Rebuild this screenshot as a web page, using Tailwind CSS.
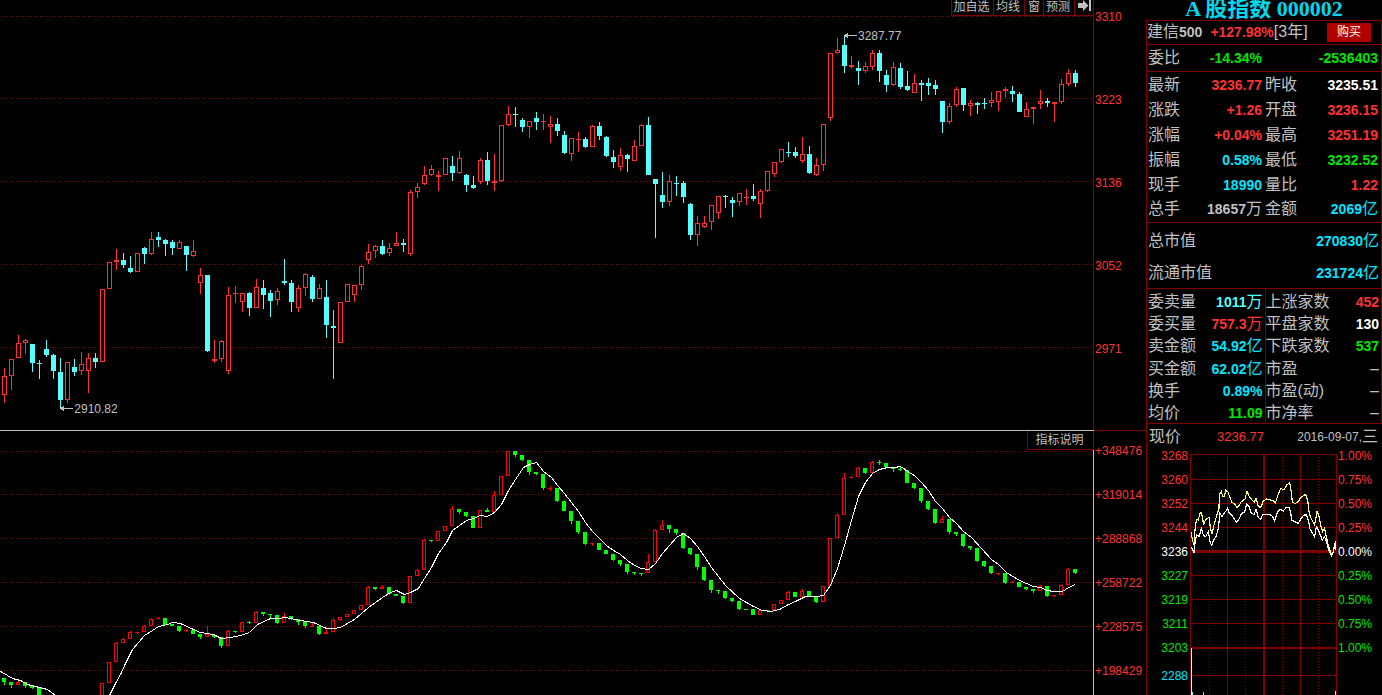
<!DOCTYPE html>
<html lang="zh-CN">
<head>
<meta charset="utf-8">
<title>A 股指数 000002</title>
<script src="https://cdn.jsdelivr.net/npm/@tailwindcss/browser@4"></script>
</head>
<body class="bg-black font-['Liberation_Sans','Noto_Sans_CJK_SC',sans-serif] text-[#c0c0c0]">
<div class="flex h-screen min-w-[900px] overflow-hidden">

  <main class="min-w-0 flex-1 text-xs">
    <section class="flex h-[430px]" aria-label="K线">
      <div class="relative min-w-0 flex-1 border-r border-[#800000]">
        <svg id="kline" class="block h-full w-full" viewBox="0 0 1093 430" preserveAspectRatio="none" shape-rendering="crispEdges"></svg>
        <nav class="absolute top-0 right-0 flex h-4 border-b border-[#800000] bg-black leading-[13px]">
          <button class="w-[42px] border-l border-[#800000] pr-0.5">加自选</button>
          <button class="w-[31px] border-l border-[#800000] pr-0.5">均线</button>
          <button class="w-[19px] border-l border-[#800000]">窗</button>
          <button class="w-[31px] border-l border-[#800000] pr-0.5">预测</button>
          <button class="flex w-[19px] justify-center border-l border-[#800000]" aria-label="展开">
            <svg class="h-3 w-[13px]" viewBox="0 0 13 12" fill="#c0c0c0"><path d="M0 3h5V0l5.500 5.500-5.500 5.500V8H0zM11 0h2v11h-2z"/></svg>
          </button>
        </nav>
        <span class="absolute top-7 left-[78.5%] leading-4">3287.77</span>
        <span class="absolute top-[401px] left-[6.8%] leading-4">2910.82</span>
      </div>
      <div class="w-[52px] pt-2 pl-px leading-[18px] text-[#ff3232]">
        <div class="h-[83px]">3310</div><div class="h-[83px]">3223</div><div class="h-[83px]">3136</div><div class="h-[83px]">3052</div><div class="h-[83px]">2971</div>
      </div>
    </section>

    <section class="flex h-[265px]" aria-label="指标">
      <div class="relative min-w-0 flex-1 border-t border-r border-[#c0c0c0]">
        <svg id="ind" class="block h-full w-full" viewBox="0 431 1093 264" preserveAspectRatio="none" shape-rendering="crispEdges"></svg>
        <button class="absolute top-0 -right-px h-[19px] w-[67px] border-x border-b border-[#800000] bg-black pr-0.5 leading-[18px]">指标说明</button>
      </div>
      <div class="w-[52px] border-t border-[#800000] pt-3 pl-px leading-4 text-[#ff3232]">
        <div class="h-11">+348476</div><div class="h-11">+319014</div><div class="h-11">+288868</div><div class="h-11">+258722</div><div class="h-11">+228575</div><div class="h-4">+198429</div>
      </div>
    </section>
  </main>

  <aside class="flex w-[236px] flex-col">
    <h1 class="h-5 text-center font-['Liberation_Serif','Noto_Sans_CJK_SC',serif] text-[22px] leading-[18px] font-bold whitespace-nowrap text-[#00d8ee]">A 股指数 000002</h1>
    <div class="border border-b-0 border-[#800000] text-base leading-4 whitespace-nowrap">
      <div class="flex h-6 items-center border-b border-[#800000] pr-2.5">
        <span>建信</span><b class="text-sm leading-4">500</b>
        <b class="ml-2 text-sm leading-4 text-[#ff3232]">+127.98%</b><span class="text-base leading-4">[3年]</span>
        <button class="ml-auto h-[19px] w-11 bg-[#b00000] text-xs text-white">购买</button>
      </div>
      <table class="w-full table-fixed text-right">
        <tbody>
          <tr class="h-[27px] border-b border-[#800000]"><th class="w-[49px] p-0 pl-px text-left font-normal">委比</th><td class="w-[66px] p-0"><b class="text-sm leading-4 text-[#00e600]">-14.34%</b></td><td class="p-0 pr-[3px]" colspan="2"><b class="text-sm leading-4 text-[#00e600]">-2536403</b></td></tr>
        </tbody>
      </table>
      <table class="w-full table-fixed border-b border-[#800000] text-right">
        <colgroup><col class="w-[49px]"><col class="w-[66px]"><col class="w-[62px]"><col></colgroup>
        <tbody>
          <tr class="h-[25px]"><th class="p-0 pl-px text-left font-normal">最新</th><td class="p-0"><b class="text-sm leading-4 text-[#ff3232]">3236.77</b></td><th class="p-0 pl-[3px] text-left font-normal">昨收</th><td class="p-0 pr-[3px]"><b class="text-sm leading-4 text-white">3235.51</b></td></tr>
          <tr class="h-[25px]"><th class="p-0 pl-px text-left font-normal">涨跌</th><td class="p-0"><b class="text-sm leading-4 text-[#ff3232]">+1.26</b></td><th class="p-0 pl-[3px] text-left font-normal">开盘</th><td class="p-0 pr-[3px]"><b class="text-sm leading-4 text-[#ff3232]">3236.15</b></td></tr>
          <tr class="h-[25px]"><th class="p-0 pl-px text-left font-normal">涨幅</th><td class="p-0"><b class="text-sm leading-4 text-[#ff3232]">+0.04%</b></td><th class="p-0 pl-[3px] text-left font-normal">最高</th><td class="p-0 pr-[3px]"><b class="text-sm leading-4 text-[#ff3232]">3251.19</b></td></tr>
          <tr class="h-[25px]"><th class="p-0 pl-px text-left font-normal">振幅</th><td class="p-0"><b class="text-sm leading-4 text-[#00e6ff]">0.58%</b></td><th class="p-0 pl-[3px] text-left font-normal">最低</th><td class="p-0 pr-[3px]"><b class="text-sm leading-4 text-[#00e600]">3232.52</b></td></tr>
          <tr class="h-[25px]"><th class="p-0 pl-px text-left font-normal">现手</th><td class="p-0"><b class="text-sm leading-4 text-[#00e6ff]">18990</b></td><th class="p-0 pl-[3px] text-left font-normal">量比</th><td class="p-0 pr-[3px]"><b class="text-sm leading-4 text-[#ff3232]">1.22</b></td></tr>
          <tr class="h-[25px]"><th class="p-0 pl-px text-left font-normal">总手</th><td class="p-0"><b class="text-sm leading-4">18657</b>万</td><th class="p-0 pl-[3px] text-left font-normal">金额</th><td class="p-0 pr-[3px] text-[#00e6ff]"><b class="text-sm leading-4">2069</b>亿</td></tr>
        </tbody>
      </table>
      <table class="w-full border-b border-[#800000] text-right [&_:is(td,th)]:pt-[3px]">
        <tbody>
          <tr class="h-[33px]"><th class="p-0 pl-px text-left font-normal">总市值</th><td class="p-0 pr-0.5 text-[#00e6ff]"><b class="text-sm leading-4">270830</b>亿</td></tr>
          <tr class="h-[33px]"><th class="p-0 pl-px text-left font-normal">流通市值</th><td class="p-0 pr-0.5 text-[#00e6ff]"><b class="text-sm leading-4">231724</b>亿</td></tr>
        </tbody>
      </table>
      <table class="h-[135px] w-full table-fixed border-b border-[#800000] text-right [&_:is(td,th)]:pt-[3px]">
        <colgroup><col class="w-[52px]"><col class="w-[66px]"><col class="w-[66px]"><col></colgroup>
        <tbody>
          <tr><th class="p-0 pl-px text-left font-normal">委卖量</th><td class="border-r border-[#800000] p-0 pr-0.5 text-[#54ffff]"><b class="text-sm leading-4">1011</b>万</td><th class="p-0 text-left font-normal">上涨家数</th><td class="p-0 pr-0.5"><b class="text-sm leading-4 text-[#ff3232]">452</b></td></tr>
          <tr><th class="p-0 pl-px text-left font-normal">委买量</th><td class="border-r border-[#800000] p-0 pr-0.5 text-[#ff3232]"><b class="text-sm leading-4">757.3</b>万</td><th class="p-0 text-left font-normal">平盘家数</th><td class="p-0 pr-0.5"><b class="text-sm leading-4 text-white">130</b></td></tr>
          <tr><th class="p-0 pl-px text-left font-normal">卖金额</th><td class="border-r border-[#800000] p-0 pr-0.5 text-[#00e6ff]"><b class="text-sm leading-4">54.92</b>亿</td><th class="p-0 text-left font-normal">下跌家数</th><td class="p-0 pr-0.5"><b class="text-sm leading-4 text-[#00e600]">537</b></td></tr>
          <tr><th class="p-0 pl-px text-left font-normal">买金额</th><td class="border-r border-[#800000] p-0 pr-0.5 text-[#00e6ff]"><b class="text-sm leading-4">62.02</b>亿</td><th class="p-0 text-left font-normal">市盈</th><td class="p-0 pr-0.5">–</td></tr>
          <tr><th class="p-0 pl-px text-left font-normal">换手</th><td class="border-r border-[#800000] p-0 pr-0.5 text-[#00e6ff]"><b class="text-sm leading-4">0.89%</b></td><th class="p-0 text-left font-normal">市盈(动)</th><td class="p-0 pr-0.5">–</td></tr>
          <tr><th class="p-0 pl-px text-left font-normal">均价</th><td class="border-r border-[#800000] p-0 pr-0.5 text-[#00e600]"><b class="text-sm leading-4">11.09</b></td><th class="p-0 text-left font-normal">市净率</th><td class="p-0 pr-0.5">–</td></tr>
        </tbody>
      </table>
    </div>

    <div class="flex-1 border-l border-[#800000] text-xs">
      <div class="flex h-5 items-center pt-1.5 pr-1 pl-0.5 leading-4">
        <span class="w-[68px] text-base leading-4">现价</span>
        <span class="flex-1 text-[13px] text-[#ff3232]">3236.77</span>
        <span>2016-09-07,</span><span class="text-base leading-4">三</span>
      </div>
      <div class="flex">
        <div class="w-[43px] pr-0.5 text-right leading-6 text-[#00e600]">
          <div class="text-[#ff3232]">3268</div><div class="text-[#ff3232]">3260</div><div class="text-[#ff3232]">3252</div><div class="text-[#ff3232]">3244</div><div class="text-white">3236</div><div>3227</div><div>3219</div><div>3211</div><div>3203</div><div class="pt-1 text-[#00e6ff]">2288</div>
        </div>
        <svg id="mini" class="mt-2.5 block h-[241px] min-w-0 flex-1" viewBox="0 0 147 241" preserveAspectRatio="none" shape-rendering="crispEdges"></svg>
        <div class="w-[45px] pl-px leading-6 text-[#00e600]">
          <div class="text-[#ff3232]">1.00%</div><div class="text-[#ff3232]">0.75%</div><div class="text-[#ff3232]">0.50%</div><div class="text-[#ff3232]">0.25%</div><div class="text-white">0.00%</div><div>0.25%</div><div>0.50%</div><div>0.75%</div><div>1.00%</div>
        </div>
      </div>
    </div>
  </aside>
</div>

<script>
const rect = (x, y, w, h, f) => `<rect x="${x}" y="${y}" width="${w}" height="${h}" fill="${f}"/>`;
const dots = (y) => `<path d="M1 ${y + .5}H1093" stroke="#800000" stroke-dasharray="1 2"/>`;
const parse = s => s.trim().split(/\s+/);
// Each bar: index, high, body top, body bottom, low, kind  (u = hollow, d = solid)
function bars(list, w, up, down) {
  return parse(list).map(t => {
    const [i, hi, top, bot, lo, k] = t.split(',').map((v, n) => n === 5 ? v : +v);
    const x = 2 + 7 * i, c = k === 'u' ? up : down;
    let o = rect(4 + 7 * i, hi, 1, lo - hi, c) + rect(x, top, w, bot - top, c);
    if (k === 'u' && bot - top > 2) o += rect(x + 1, top + 1, w - 2, bot - top - 2, '#000');
    return o;
  }).join('');
}
const K = `
0,368,376,395,403,u 1,359,359,376,390,u 2,335,343,358,358,u 3,339,340,343,354,u 4,344,344,363,372,d 5,360,363,364,379,d 6,340,349,355,357,d 7,354,355,371,379,d 8,358,372,400,409,d 9,362,362,400,403,u
10,359,367,372,376,d 11,352,364,371,375,u 12,353,358,371,393,u 13,353,358,362,368,d 14,289,289,362,362,u 15,262,262,289,289,u 16,249,260,262,270,u 17,253,260,265,268,d 18,256,268,272,273,d 19,253,253,272,272,u
20,247,248,254,264,d 21,232,239,254,255,u 22,232,237,240,247,d 23,239,240,244,256,d 24,240,242,248,255,d 25,240,242,249,249,u 26,246,246,255,271,d 27,240,251,256,257,u 28,268,275,283,294,u 29,275,275,351,352,d
30,340,359,361,363,u 31,340,341,359,362,u 32,287,295,371,374,u 33,286,293,294,303,u 34,293,293,302,312,u 35,292,293,308,316,d 36,279,287,308,308,u 37,280,288,295,309,d 38,290,293,301,317,d 39,288,291,300,305,u
40,259,281,283,285,d 41,280,283,302,312,d 42,285,288,308,312,u 43,273,274,288,296,u 44,275,277,299,302,d 45,284,288,299,299,u 46,280,297,325,338,d 47,310,326,328,379,d 48,302,302,343,343,u 49,284,284,302,302,u
50,285,285,295,302,u 51,265,266,285,290,u 52,244,252,260,264,u 53,245,246,251,258,u 54,240,246,254,255,d 55,243,248,253,256,u 56,232,243,246,246,u 57,239,243,245,252,d 58,190,192,254,256,u 59,183,187,192,198,u
60,166,175,184,185,u 61,165,169,175,176,u 62,171,175,177,191,u 63,158,158,175,175,u 64,156,166,173,181,d 65,151,158,173,174,u 66,174,175,185,192,d 67,176,185,188,189,d 68,158,160,182,184,u 69,152,160,181,185,d
70,154,181,183,191,u 71,125,125,181,182,u 72,106,114,125,126,u 73,107,114,115,127,d 74,118,120,127,132,d 75,121,121,127,138,u 76,112,118,122,130,d 77,114,121,122,130,u 78,116,124,127,143,u 79,118,124,131,136,d
80,131,135,153,154,d 81,138,138,154,161,u 82,132,139,140,152,u 83,137,139,147,148,d 84,125,126,147,147,u 85,122,126,136,140,d 86,136,137,156,157,d 87,150,157,162,168,d 88,148,155,167,171,u 89,154,155,159,172,d
90,140,146,161,161,u 91,124,125,146,146,u 92,117,125,175,175,d 93,179,179,184,238,d 94,172,195,202,208,d 95,175,181,202,206,u 96,176,183,184,196,d 97,181,183,197,203,d 98,203,204,235,240,d 99,216,223,235,246,u
100,216,223,227,228,u 101,205,205,222,230,u 102,196,196,213,219,u 103,195,196,197,208,d 104,197,200,203,217,d 105,193,193,202,206,u 106,189,197,198,205,u 107,184,196,199,201,d 108,189,191,204,218,u 109,171,171,191,192,u
110,162,162,174,177,u 111,149,149,162,163,u 112,142,152,153,157,d 113,147,152,156,158,d 114,137,154,161,163,u 115,146,154,173,174,d 116,158,165,175,176,u 117,124,124,165,171,u 118,53,53,118,121,u 119,38,50,53,54,u
120,35,45,66,73,d 121,56,65,67,69,u 122,61,68,71,85,d 123,62,66,71,73,u 124,50,53,67,70,u 125,50,53,71,82,d 126,70,75,85,92,d 127,62,67,85,86,u 128,63,68,87,89,d 129,71,86,90,91,d
130,74,83,93,93,u 131,80,83,85,101,d 132,78,83,86,95,d 133,80,85,89,95,d 134,101,101,122,133,d 135,103,106,122,124,u 136,87,89,105,107,u 137,88,88,105,111,d 138,100,103,106,116,u 139,102,103,105,114,d
140,98,103,104,109,d 141,92,100,103,107,u 142,91,91,102,111,u 143,87,89,91,98,u 144,86,91,94,102,d 145,92,94,112,112,d 146,102,109,117,117,u 147,107,107,109,124,u 148,90,101,104,109,u 149,98,101,103,107,d
150,102,102,104,122,u 151,79,84,102,104,u 152,69,73,84,86,u 153,70,73,83,87,d`;
const I = `
0,678,678,682,685,d 1,682,682,685,688,d 2,681,682,685,685,u 3,682,682,686,688,d 4,685,686,688,689,d 5,688,688,696,696,d 14,683,683,697,697,u 15,662,662,683,683,u 16,642,643,662,662,u 17,638,639,643,643,u 18,631,632,639,639,u 19,632,632,633,634,u
20,625,626,632,632,u 21,618,619,626,626,u 22,617,618,619,619,u 23,618,618,625,625,d 24,624,624,626,626,d 25,626,626,631,632,d 26,629,630,631,632,u 27,630,630,634,634,d 28,634,634,637,639,d 29,626,634,637,637,u
30,634,635,637,638,d 31,637,637,646,648,d 32,630,631,646,646,u 33,631,631,632,633,d 34,622,622,632,632,u 35,621,622,623,624,d 36,611,612,623,623,u 37,612,612,614,616,d 38,614,614,615,618,d 39,615,615,623,624,d
40,613,616,623,623,u 41,616,616,619,620,d 42,619,619,622,625,d 43,621,621,626,628,d 44,622,626,627,627,u 45,625,626,634,635,d 46,627,632,634,634,u 47,618,620,632,632,u 48,617,617,620,621,u 49,614,614,617,617,u
50,610,610,614,614,u 51,605,605,610,610,u 52,586,587,605,605,u 53,587,587,589,590,d 54,585,587,589,589,u 55,587,587,594,595,d 56,594,594,596,596,d 57,596,596,603,604,d 58,576,576,603,603,u 59,569,570,576,576,u
60,539,540,570,570,u 61,540,540,541,542,d 62,531,531,541,541,u 63,526,526,531,531,u 64,506,509,526,526,u 65,509,509,512,514,d 66,512,512,516,517,d 67,516,516,528,528,d 68,510,510,528,528,u 69,508,510,512,512,d
70,491,495,512,512,u 71,476,476,495,495,u 72,451,451,476,476,u 73,451,451,455,457,d 74,455,455,460,461,d 75,460,460,472,475,d 76,472,472,474,475,d 77,474,474,488,490,d 78,486,488,489,491,u 79,488,488,501,502,d
80,501,501,511,511,d 81,511,511,521,524,d 82,521,521,532,534,d 83,532,532,544,545,d 84,543,543,544,546,u 85,543,543,550,550,d 86,550,550,554,554,d 87,554,554,560,561,d 88,560,560,564,566,d 89,564,564,572,574,d
90,572,572,573,575,d 91,573,573,574,576,d 92,554,562,573,573,u 93,529,530,562,562,u 94,520,525,530,530,u 95,525,525,529,533,d 96,529,529,533,535,d 97,533,533,548,549,d 98,548,548,554,555,d 99,554,554,567,570,d
100,567,567,580,581,d 101,580,580,590,593,d 102,590,590,591,594,d 103,591,591,598,599,d 104,598,598,601,602,d 105,601,601,609,610,d 106,609,609,610,610,d 107,609,609,615,615,d 108,610,610,615,615,u 109,610,610,611,612,d
110,604,604,610,610,u 111,600,600,604,604,u 112,591,592,600,600,u 113,592,592,597,597,d 114,589,591,597,597,u 115,591,591,596,597,d 116,596,596,602,603,d 117,586,586,602,602,u 118,538,538,586,586,u 119,513,515,538,538,u
120,473,478,515,515,u 121,476,477,478,478,u 122,467,468,477,477,u 123,468,468,473,474,d 124,461,462,473,473,u 125,460,462,463,465,d 126,463,463,467,468,d 127,467,468,469,472,d 128,467,469,470,471,d 129,470,470,483,483,d
130,483,483,488,489,d 131,488,488,501,503,d 132,501,501,509,510,d 133,509,509,523,524,d 134,516,519,523,523,u 135,519,519,532,534,d 136,532,532,534,536,d 137,534,534,546,547,d 138,546,546,548,550,d 139,548,548,561,562,d
140,561,561,566,567,d 141,566,566,573,574,d 142,573,573,574,575,u 143,573,573,583,584,d 144,581,582,583,583,u 145,582,582,587,587,d 146,587,587,589,590,d 147,589,589,591,593,d 148,585,586,591,591,u 149,586,586,596,597,d
150,595,595,596,597,u 151,585,585,595,595,u 152,568,569,585,585,u 153,569,569,573,574,d`;
const MA = `0,671 7,675 12,678 20,680 27,684 35,686 47,689 55,695 70,712 95,712 109,695 115,683 121,672 125,663 132,649 144,635 152,630 158,626 167,624 172,622 180,623 193,629 200,632 213,634 221,638 230,637 240,635 249,632 257,624 270,618 278,618 285,617 300,620 313,622 326,628 333,628 340,627 354,619 368,607 382,597 390,592 396,590 404,594 410,592 418,588 424,578 431,567 438,553 446,542 452,530 466,520 473,518 480,515 487,516 494,512 501,504 508,490 515,479 523,467 529,464 536,462 543,471 551,477 557,485 564,493 571,502 578,511 585,522 592,531 599,538 606,545 613,550 620,554 627,560 634,565 641,568 648,569 655,563 662,553 669,545 676,537 683,533 690,538 697,546 704,556 711,567 718,576 725,585 739,598 753,606 762,610 770,611 779,609 788,604 795,601 805,596 816,596 823,595 830,585 837,568 844,545 851,520 858,496 865,482 872,473 879,469 887,467 895,467 899,466 902,467 907,471 914,475 921,482 928,490 935,501 942,508 949,517 956,523 963,531 971,537 991,559 998,564 1006,572 1019,580 1033,586 1040,587 1047,590 1053,591 1062,591 1068,587 1075,584`;
const arrow = (x, y) => rect(x, y, 13, 1, '#c0c0c0') + rect(x + 1, y - 1, 3, 3, '#c0c0c0') + rect(x + 3, y - 2, 1, 5, '#c0c0c0');
document.getElementById('kline').innerHTML =
  [16, 98, 181, 264, 347].map(dots).join('') + bars(K, 5, '#ff3232', '#54ffff') + arrow(844, 35) + arrow(60, 408);
document.getElementById('ind').innerHTML =
  [451, 494, 538, 582, 626, 670].map(dots).join('') + bars(I, 4, '#ff0000', '#00ff00') +
  `<polyline points="${MA}" transform="translate(.5 .5)" fill="none" stroke="#fff"/>`;

// Intraday chart; price traces are stored at three units per pixel
const Y = `154,320 157,345 162,360 166,300 170,283 175,285 179,268 183,262 187,275 191,300 196,285 202,280 208,277 211,310 216,325 222,300 230,272 237,250 238,210 244,199 248,215 253,215 257,196 264,201 270,218 276,232 283,236 291,248 298,240 304,230 315,222 321,199 328,215 336,225 343,232 348,220 355,244 362,248 370,228 380,222 392,225 400,226 406,234 414,210 422,190 432,195 440,180 449,173 453,195 457,230 464,236 473,232 482,218 490,212 497,208 503,225 508,268 516,285 524,300 531,260 536,270 542,300 548,320 554,310 560,340 566,365 573,385 578,388 583,365 588,348`;
const W = `154,365 158,375 162,382 166,345 170,330 178,335 184,310 190,330 197,335 205,320 210,350 215,361 221,345 228,335 235,310 240,265 246,275 252,265 258,258 263,250 268,265 275,270 280,278 290,292 297,282 305,265 314,262 320,236 327,245 333,262 342,270 348,252 355,278 362,283 368,268 378,270 390,268 398,275 404,287 412,262 420,253 430,258 438,248 447,248 452,262 455,286 465,290 475,295 485,278 492,270 500,270 506,290 510,312 518,325 524,335 529,305 535,315 541,330 547,345 553,335 560,350 566,375 574,392 580,380 584,355 588,375`;
const R = '#800000';
const trace = (p, c) => `<polyline points="${p}" transform="scale(.3333) translate(-150 -87)" fill="none" stroke="${c}" stroke-width="3.5"/>`;
document.getElementById('mini').innerHTML =
  [0, 25, 49, 73, 121, 145, 169, 221].map(y => rect(0, y, 147, 1, R)).join('') +
  rect(0, 96, 147, 3, R) + rect(0, 193, 147, 2, R) +
  [0, 37, 110, 146].map(x => rect(x, 0, 1, 241, R)).join('') + rect(73, 0, 2, 241, R) +
  [19, 55, 92, 128].map(x => `<path d="M${x + .5} 3V241" stroke="${R}" stroke-dasharray="1 2"/>`).join('') +
  trace(Y, '#ffff80') + trace(W, '#fff') +
  rect(1, 194, 1, 47, '#fff') + rect(2, 238, 1, 3, '#54ffff') + rect(13, 238, 1, 3, '#54ffff') + rect(145, 237, 1, 4, '#ffff80');
</script>
</body>
</html>
